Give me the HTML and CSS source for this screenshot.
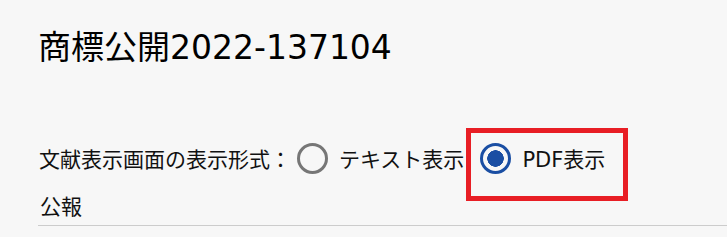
FILE: index.html
```html
<!DOCTYPE html>
<html>
<head>
<meta charset="utf-8">
<title>商標公開2022-137104</title>
<link rel="stylesheet" href="styles.css">
</head>
<body>

<div class="page">
  <h1 class="docTitle">商標公開2022-137104</h1>

  <div class="viewMode">
    <span class="viewLabel">文献表示画面の表示形式：</span>
    <label class="option firstOpt">
      <span class="radio"></span>
      <span>テキスト表示</span>
    </label>
    <label class="option optMarked">
      <span class="radio radioOn"></span>
      <span>PDF表示</span>
    </label>
  </div>

  <div class="section">公報</div>
</div>

</body>
</html>
```

FILE: styles.css
```css
body {
  margin: 0;
  background-color: #F7F7F7;
  color: #111111;
  font-family: "DejaVu Sans", "Noto Sans CJK JP", sans-serif;
}
.page {
  padding: 28px 0 0 38px;
}
.docTitle {
  margin: 0;
  font-size: 33px;
  font-weight: normal;
  line-height: 40px;
  color: #000000;
}
.viewMode {
  display: flex;
  align-items: center;
  height: 40px;
  margin-top: 70px;
  font-size: 21px;
}
.viewLabel {
  margin-left: 1px;
}
.option {
  display: flex;
  align-items: center;
  gap: 11px;
  margin-left: 16px;
  position: relative;
}
.firstOpt {
  margin-left: 6px;
}
.radio {
  box-sizing: border-box;
  width: 31px;
  height: 31px;
  border: 3px solid #767676;
  border-radius: 50%;
}
.radioOn {
  border-color: #1A4EA3;
  background: radial-gradient(circle, #1A4EA3 0, #1A4EA3 8px, transparent 8.5px);
}
.optMarked::after {
  content: "";
  position: absolute;
  left: -14px;
  top: -15px;
  right: -23px;
  bottom: -27px;
  border: 5px solid #E81E25;
}
.section {
  margin-top: 17px;
  padding: 0 0 6px 2px;
  font-size: 21px;
  line-height: 24px;
  border-bottom: 1px solid #CCCCCC;
}
```
